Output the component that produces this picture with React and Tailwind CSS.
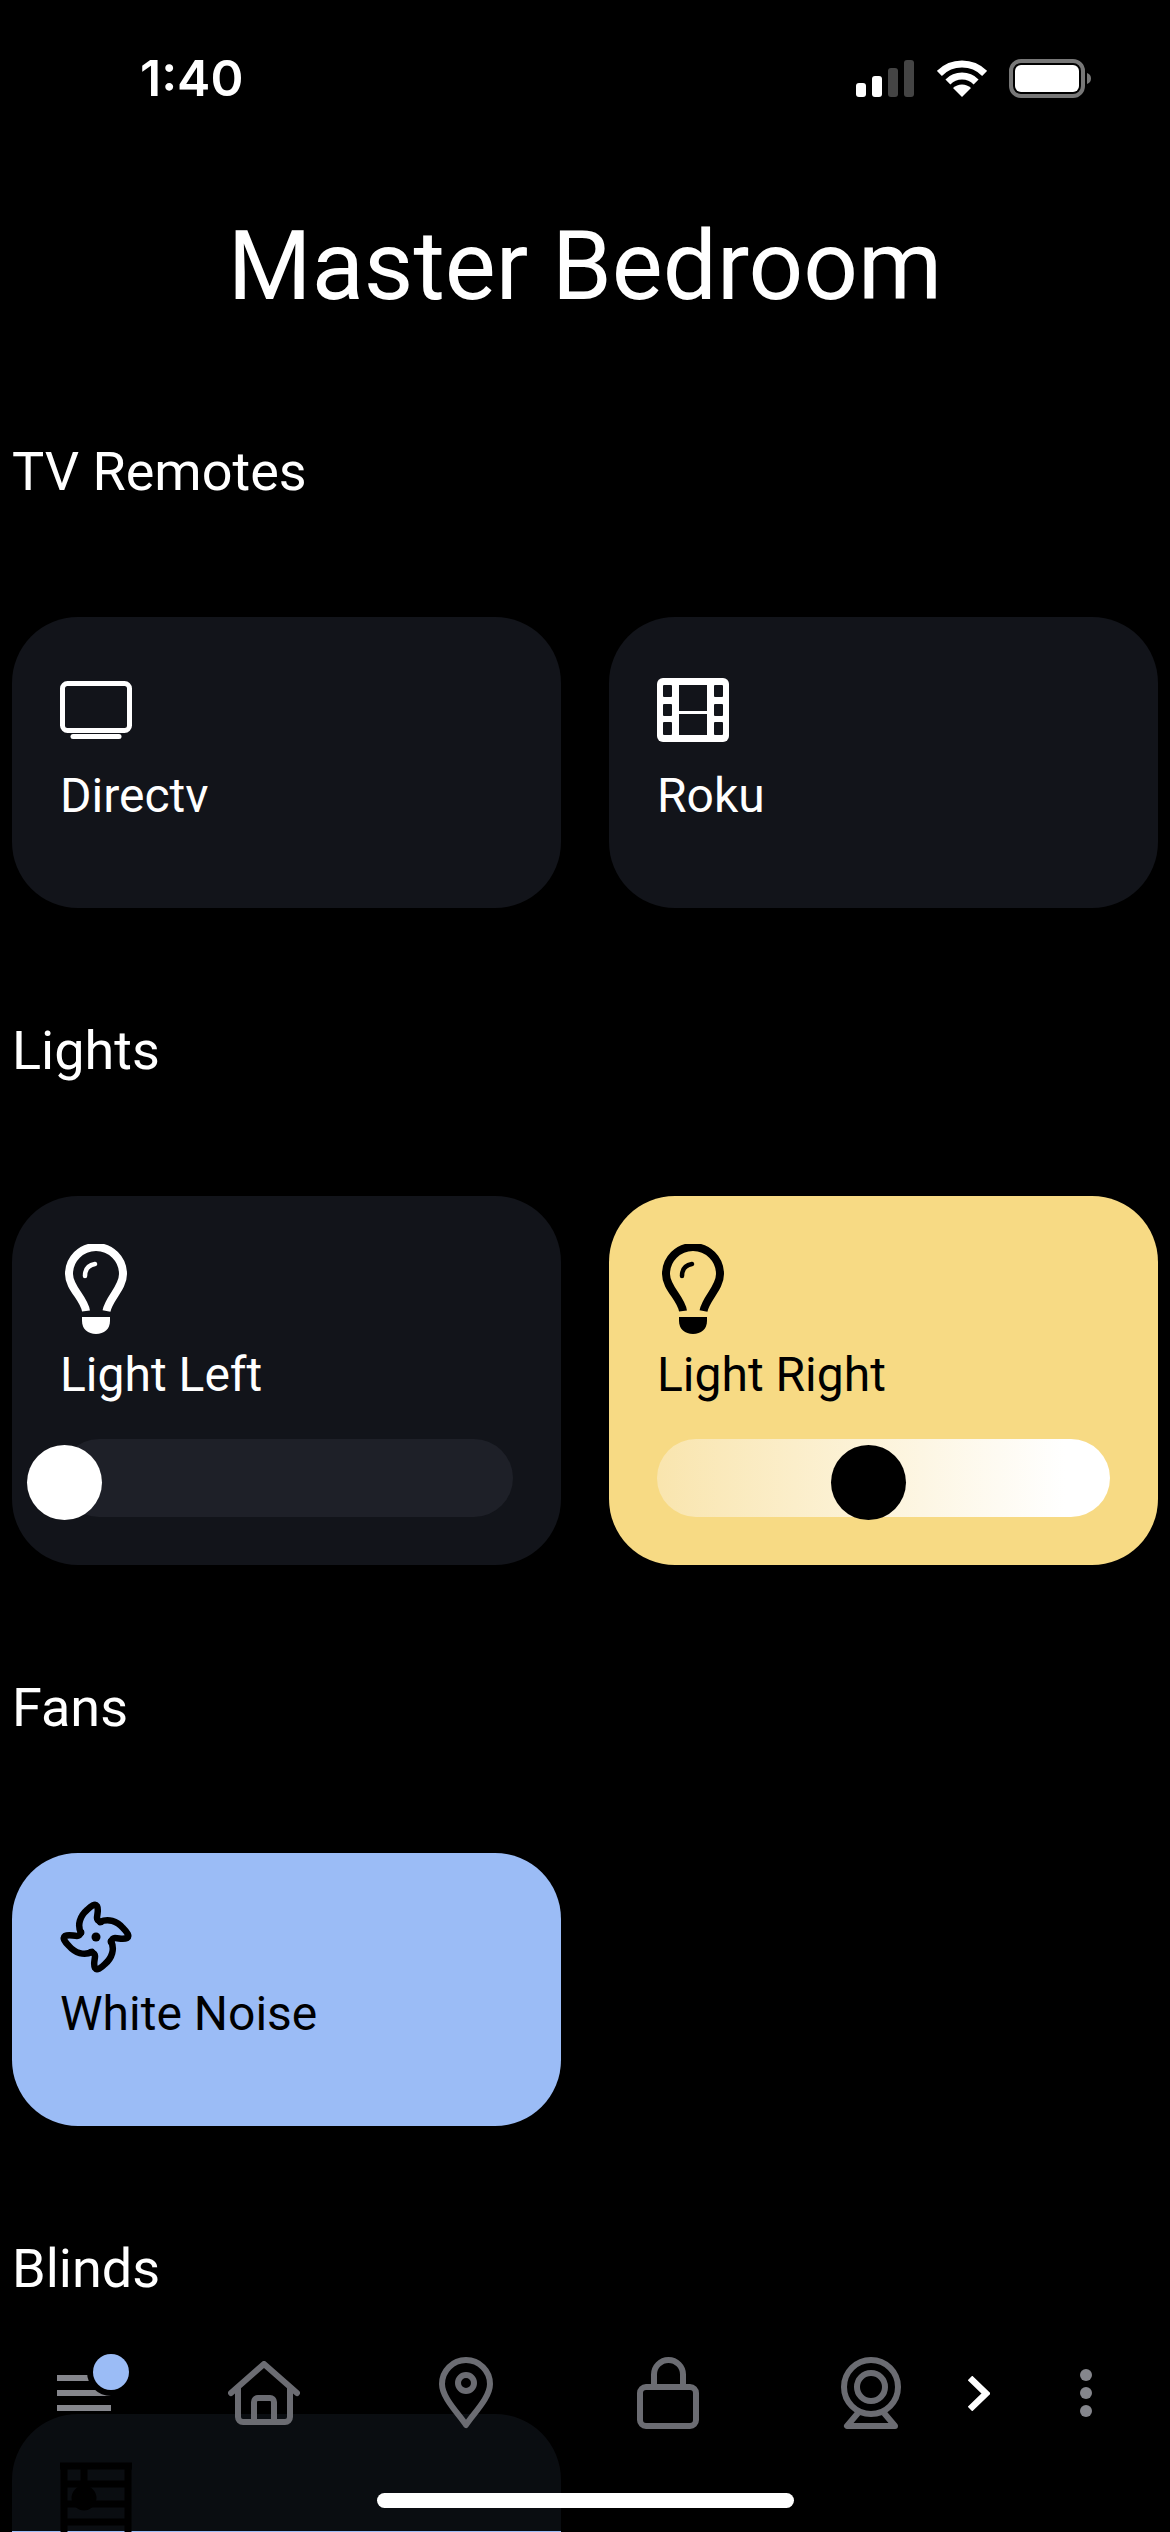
import React from "react";

const font = { fontFamily: "Roboto, sans-serif" };

function Signal() {
  return (
    <svg width="58" height="37" viewBox="0 0 58 37">
      <rect x="0" y="23" width="10" height="14" rx="3" fill="#fff" />
      <rect x="16" y="16" width="10" height="21" rx="3" fill="#fff" />
      <rect x="32" y="8" width="10" height="29" rx="3" fill="#444" />
      <rect x="48" y="0" width="10" height="37" rx="3" fill="#444" />
    </svg>
  );
}

function Wifi() {
  return (
    <svg width="50" height="37" viewBox="0 0 50 37">
      <path d="M2.4 13.4A32 32 0 0 1 47.6 13.4" fill="none" stroke="#fff" strokeWidth="7" />
      <path d="M10.9 21.9A20 20 0 0 1 39.1 21.9" fill="none" stroke="#fff" strokeWidth="7" />
      <path d="M25 37L16 28A13 13 0 0 1 34 28Z" fill="#fff" />
    </svg>
  );
}

function Battery() {
  return (
    <svg width="82" height="39" viewBox="0 0 82 39">
      <rect x="2" y="2" width="72" height="35" rx="10" fill="none" stroke="#777" strokeWidth="4" />
      <rect x="6" y="6" width="64" height="27" rx="6" fill="#fff" />
      <path d="M78 14C81 15 82 17 82 19.500C82 22 81 24 78 25Z" fill="#777" />
    </svg>
  );
}

function TvIcon() {
  return (
    <svg width="72" height="58" viewBox="0 0 72 58" fill="none" stroke="#fff">
      <rect x="2.500" y="2.500" width="67" height="47" rx="5" strokeWidth="5" />
      <path d="M13 55.500H59" strokeWidth="5" strokeLinecap="round" />
    </svg>
  );
}

function FilmIcon() {
  const hole = "#12141a";
  return (
    <svg width="72" height="64" viewBox="0 0 72 64">
      <rect width="72" height="64" rx="6" fill="#fff" />
      <rect x="6" y="7" width="9" height="12" rx="1" fill={hole} />
      <rect x="6" y="26" width="9" height="12" rx="1" fill={hole} />
      <rect x="6" y="44" width="9" height="13" rx="1" fill={hole} />
      <rect x="57" y="7" width="9" height="12" rx="1" fill={hole} />
      <rect x="57" y="26" width="9" height="12" rx="1" fill={hole} />
      <rect x="57" y="44" width="9" height="13" rx="1" fill={hole} />
      <rect x="22" y="7" width="28" height="26" fill={hole} />
      <rect x="22" y="36" width="28" height="21" fill={hole} />
    </svg>
  );
}

function BulbIcon({ color }) {
  return (
    <svg width="62" height="90" viewBox="0 0 62 90" fill="none" stroke={color}>
      <path d="M21 67C19 54 4 44 4 30A27 27 0 0 1 58 30C58 44 44 54 41.500 67" strokeWidth="8" />
      <path d="M20 32C20 25 24 21 30 20" strokeWidth="4.500" strokeLinecap="round" />
      <path d="M17 73H45V77C45 85 39 90 31 90C23 90 17 85 17 77Z" fill={color} stroke="none" />
    </svg>
  );
}

function FanIcon() {
  const blade = "M21 32C17 24 20 15 27 9C31 5 35 2 37 5C39 9 37 13 37 17C37 19 38 20 41 21";
  return (
    <svg width="72" height="72" viewBox="0 0 72 72" fill="none" stroke="#000" strokeWidth="6.500" strokeLinecap="round" strokeLinejoin="round">
      <path d={blade} />
      <path d={blade} transform="rotate(90 36 36)" />
      <path d={blade} transform="rotate(180 36 36)" />
      <path d={blade} transform="rotate(270 36 36)" />
      <circle cx="36" cy="36" r="4.500" fill="#000" stroke="none" />
    </svg>
  );
}

function BlindsIcon() {
  return (
    <svg width="72" height="72" viewBox="0 0 72 72" fill="none" stroke="#000" strokeWidth="7">
      <path d="M0 4H72M4 4V72M68 4V72M4 22H68M4 42H68M4 60H68" />
      <path d="M24 4V30" />
      <circle cx="24" cy="36" r="9" fill="#000" />
    </svg>
  );
}

function Card({ bg, text, icon, iconBox, label, slider }) {
  return (
    <div className={`rounded-[66px] px-12 pt-12 pb-12 ${bg} ${text}`}>
      <div className={`flex items-center mb-[12.5px] ${iconBox}`}>{icon}</div>
      <div className="h-14 text-[48px] leading-[56px] mb-[36.5px]">{label}</div>
      {slider}
    </div>
  );
}

function Slider({ track, thumb, left }) {
  return (
    <div className={`relative h-[78px] rounded-full ${track}`}>
      <div className={`absolute top-[6px] w-[75px] h-[75px] rounded-full ${thumb} ${left}`} />
    </div>
  );
}

function Section({ title, children, first }) {
  return (
    <section className={first ? "mt-[118px]" : "mt-[111px]"}>
      <h2 className="text-[54px] leading-[64px] font-normal text-white mb-[113px] ml-[12px]">{title}</h2>
      <div className="grid grid-cols-2 gap-x-12 ml-[12px] mr-[12px]">{children}</div>
    </section>
  );
}

function BurgerIcon() {
  return (
    <div className="relative w-[54px] h-[36px]">
      <div className="w-[54px] h-[6px] bg-[#85868c]" />
      <div className="w-[54px] h-[6px] bg-[#85868c] mt-[9px]" />
      <div className="w-[54px] h-[6px] bg-[#85868c] mt-[9px]" />
      <div className="absolute left-[30px] -top-[27px] w-[48px] h-[48px] rounded-full bg-black" />
      <div className="absolute left-[36px] -top-[21px] w-[36px] h-[36px] rounded-full bg-[#9bbcf6]" />
    </div>
  );
}

const grey = "#6b6c72";

export default function App() {
  return (
    <div className="relative w-[1170px] h-[2532px] overflow-hidden bg-black text-white" style={font}>
      <header className="flex items-center h-10 mt-[58px] pl-[140px] pr-[79px]">
        <span className="text-[50px] leading-10 font-semibold" style={{ fontFamily: "Inter, sans-serif" }}>1:40</span>
        <div className="ml-auto flex items-center">
          <Signal />
          <div className="ml-[23px]"><Wifi /></div>
          <div className="ml-[22px]"><Battery /></div>
        </div>
      </header>

      <h1 className="mt-[112px] text-center text-[96px] leading-[112px] font-normal">Master Bedroom</h1>

      <Section title="TV Remotes" first>
        <Card bg="bg-[#12141a]" text="text-white" iconBox="h-[90px]" icon={<TvIcon />} label="Directv" />
        <Card bg="bg-[#12141a]" text="text-white" iconBox="h-[90px]" icon={<FilmIcon />} label="Roku" />
      </Section>

      <Section title="Lights">
        <Card
          bg="bg-[#12141a]"
          text="text-white"
          iconBox="h-[90px] pl-[5px]"
          icon={<BulbIcon color="#fff" />}
          label="Light Left"
          slider={<Slider track="bg-[#1e2028]" thumb="bg-white" left="-left-[33px]" />}
        />
        <Card
          bg="bg-[#f7da84]"
          text="text-black"
          iconBox="h-[90px] pl-[5px]"
          icon={<BulbIcon color="#000" />}
          label="Light Right"
          slider={<Slider track="bg-gradient-to-r from-[#f9e5ae] to-white to-90%" thumb="bg-black" left="left-[174px]" />}
        />
      </Section>

      <Section title="Fans">
        <Card bg="bg-[#9bbcf6]" text="text-black" iconBox="h-[72px]" icon={<FanIcon />} label="White Noise" />
      </Section>

      <Section title="Blinds">
        <Card bg="bg-[#9bbcf6]" text="text-black" iconBox="h-[72px]" icon={<BlindsIcon />} label="" />
      </Section>

      <nav className="absolute left-0 right-0 bottom-[1px] h-[191px] pt-[17px] bg-black/[0.935]">
        <div className="flex items-center h-[72px] pl-[57px]">
          <BurgerIcon />
          <svg className="ml-[117px]" width="72" height="64" viewBox="0 0 72 64" fill="none" stroke={grey} strokeWidth="6" strokeLinecap="round" strokeLinejoin="round">
            <path d="M3 32L36 3L69 32" />
            <path d="M10 27V56A5 5 0 0 0 15 61H57A5 5 0 0 0 62 56V27" />
            <path d="M26 60V41A4 4 0 0 1 30 37H42A4 4 0 0 1 46 41V60" />
          </svg>
          <svg className="ml-[139px]" width="54" height="72" viewBox="0 0 54 72" fill="none" stroke={grey} strokeWidth="6" strokeLinejoin="round">
            <path d="M27 68C20 57 3 41 3 27A24 24 0 0 1 51 27C51 41 34 57 27 68Z" />
            <circle cx="27" cy="26" r="8" />
          </svg>
          <svg className="ml-[144px]" width="62" height="72" viewBox="0 0 62 72" fill="none" stroke={grey} strokeWidth="6">
            <rect x="3" y="30" width="56" height="39" rx="6" />
            <path d="M17 30V17.500A14.500 14.500 0 0 1 46 17.500V30" />
          </svg>
          <svg className="ml-[142px]" width="60" height="72" viewBox="0 0 60 72" fill="none" stroke={grey} strokeWidth="6" strokeLinejoin="round">
            <circle cx="30" cy="30" r="27" />
            <circle cx="30" cy="30" r="14" />
            <path d="M17 56L6 69H54L43 56" />
          </svg>
          <svg className="ml-[67px]" width="22" height="35" viewBox="0 0 22 35" fill="none" stroke="#fff" strokeWidth="6.500">
            <path d="M2 2L18 17.500L2 33" />
          </svg>
          <div className="ml-[90px] flex flex-col gap-[6px]">
            <div className="w-3 h-3 rounded-full bg-[#85868c]" />
            <div className="w-3 h-3 rounded-full bg-[#85868c]" />
            <div className="w-3 h-3 rounded-full bg-[#85868c]" />
          </div>
        </div>
        <div className="w-[417px] h-[15px] mt-[64px] ml-[377px] rounded-full bg-white" />
      </nav>
    </div>
  );
}
